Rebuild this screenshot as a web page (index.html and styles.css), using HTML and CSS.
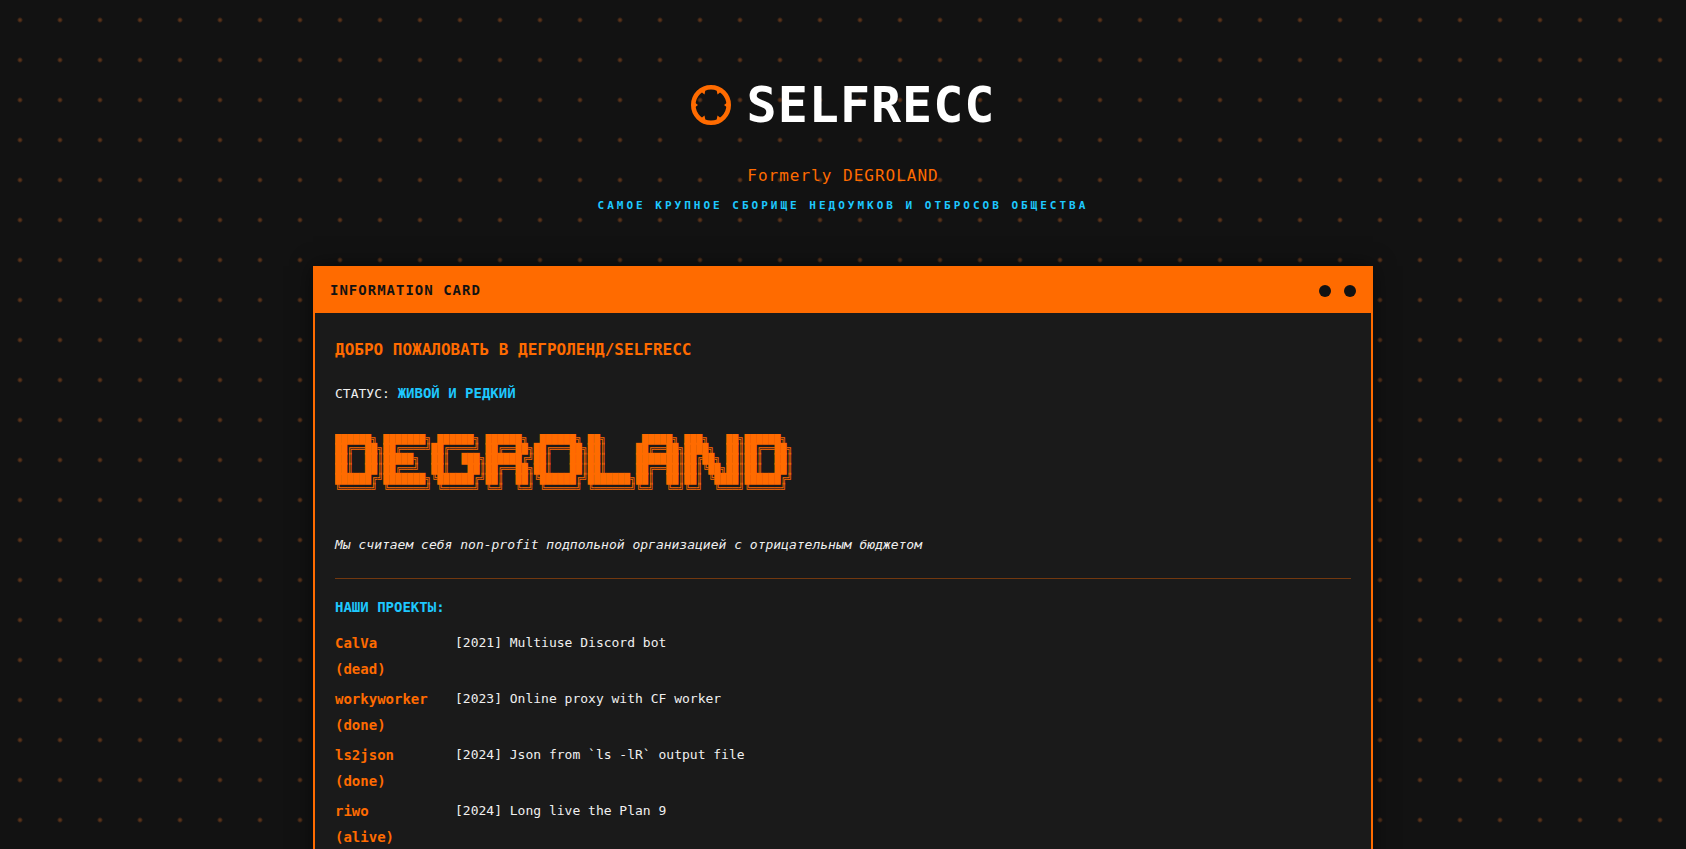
FILE: index.html
```html
<!DOCTYPE html>
<html lang="ru">
<head>
<meta charset="utf-8">
<meta name="viewport" content="width=device-width, initial-scale=1">
<title>SELFRECC</title>
<link rel="stylesheet" href="styles.css">
</head>
<body>
<div class="page">
  <header class="masthead">
    <div class="brand">
      <svg class="brand-icon" viewBox="0 0 40 40" aria-hidden="true">
        <circle cx="20" cy="20" r="17.7" fill="none" stroke="#ff6b00" stroke-width="4.6"/>
        <path fill="#ff6b00" d="M8 5 14.500 4.500 13.500 9.500 11 7.500zM32 5 25.500 4.500 26.500 9.500 29 7.500zM8 35 14.500 35.500 13.500 30.500 11 32.500zM32 35 25.500 35.500 26.500 30.500 29 32.500zM3 17 7 20 3 23zM37 17 33 20 37 23z"/>
      </svg>
      <h1 class="brand-name">SELFRECC</h1>
    </div>
    <p class="former-name">Formerly DEGROLAND</p>
    <p class="tagline">САМОЕ КРУПНОЕ СБОРИЩЕ НЕДОУМКОВ И ОТБРОСОВ ОБЩЕСТВА</p>
  </header>

  <main class="card">
    <div class="card-header">
      <span class="card-title">INFORMATION CARD</span>
      <span class="card-dots"><i class="dot"></i><i class="dot"></i></span>
    </div>
    <div class="card-body">
      <h2 class="welcome">ДОБРО ПОЖАЛОВАТЬ В ДЕГРОЛЕНД/SELFRECC</h2>
      <p class="status">СТАТУС: <strong class="status-value">ЖИВОЙ И РЕДКИЙ</strong></p>
<pre class="ascii">██████╗ ███████╗ ██████╗ ██████╗  ██████╗ ██╗      █████╗ ███╗   ██╗██████╗ 
██╔══██╗██╔════╝██╔════╝ ██╔══██╗██╔═══██╗██║     ██╔══██╗████╗  ██║██╔══██╗
██║  ██║█████╗  ██║  ███╗██████╔╝██║   ██║██║     ███████║██╔██╗ ██║██║  ██║
██║  ██║██╔══╝  ██║   ██║██╔══██╗██║   ██║██║     ██╔══██║██║╚██╗██║██║  ██║
██████╔╝███████╗╚██████╔╝██║  ██║╚██████╔╝███████╗██║  ██║██║ ╚████║██████╔╝
╚═════╝ ╚══════╝ ╚═════╝ ╚═╝  ╚═╝ ╚═════╝ ╚══════╝╚═╝  ╚═╝╚═╝  ╚═══╝╚═════╝ </pre>
      <p class="motto">Мы считаем себя non-profit подпольной организацией с отрицательным бюджетом</p>
      <section class="projects">
        <h3 class="projects-title">НАШИ ПРОЕКТЫ:</h3>
        <dl class="project-list">
          <dt>CalVa (dead)</dt><dd>[2021] Multiuse Discord bot</dd>
          <dt>workyworker (done)</dt><dd>[2023] Online proxy with CF worker</dd>
          <dt>ls2json (done)</dt><dd>[2024] Json from `ls -lR` output file</dd>
          <dt>riwo<br>(alive)</dt><dd>[2024] Long live the Plan 9</dd>
        </dl>
      </section>
    </div>
  </main>
</div>
</body>
</html>
```

FILE: styles.css
```css
:root {
  --orange: #ff6b00;
  --cyan: #1ec8ff;
  --ink: #121212;
  --panel: #1a1a1a;
  --text: #f0f0f0;
}

* {
  box-sizing: border-box;
  margin: 0;
  padding: 0;
}

body {
  background-color: var(--ink);
  background-image: radial-gradient(circle at center, rgba(255, 124, 40, 0.3) 1px, transparent 3px);
  background-size: 40px 40px;
  color: var(--text);
  font-family: "DejaVu Sans Mono", monospace;
  font-size: 13px;
  line-height: 26px;
}

.page {
  max-width: 1100px;
  margin: 0 auto;
  padding: 40px 20px;
}

.masthead {
  padding: 30px 0 47px;
  text-align: center;
}

.brand {
  display: flex;
  align-items: center;
  justify-content: center;
  gap: 16px;
  margin-bottom: 23px;
}

.brand-icon {
  width: 40px;
  height: 40px;
}

.brand-name {
  color: #fff;
  font-size: 50px;
  line-height: 70px;
  letter-spacing: 1px;
}

.former-name {
  color: var(--orange);
  font-size: 16px;
  letter-spacing: 1px;
  margin-bottom: 4px;
}

.tagline {
  color: var(--cyan);
  font-size: 11px;
  font-weight: bold;
  letter-spacing: 3px;
}

.card {
  background: var(--panel);
  border: 2px solid var(--orange);
  box-shadow: 0 0 20px rgba(0, 0, 0, 0.5);
}

.card-header {
  display: flex;
  align-items: center;
  justify-content: space-between;
  padding: 10px 15px;
  background: var(--orange);
  color: var(--ink);
  font-size: 14px;
  font-weight: bold;
  line-height: 25px;
  letter-spacing: 1px;
}

.card-dots {
  display: flex;
  gap: 13px;
}

.dot {
  width: 12px;
  height: 12px;
  border-radius: 50%;
  background: var(--ink);
}

.card-body {
  padding: 24px 20px;
}

.welcome {
  color: var(--orange);
  font-size: 16px;
  margin-bottom: 17px;
}

.status {
  margin-bottom: 27px;
}

.status-value {
  color: var(--cyan);
  font-size: 14px;
}

.ascii {
  overflow-x: auto;
  color: var(--orange);
  font-family: "DejaVu Sans Mono", monospace;
  font-size: 10px;
  line-height: 10px;
  margin-bottom: 38px;
}

.motto {
  font-style: italic;
  margin-bottom: 20px;
}

.projects {
  border-top: 1px solid #72380f;
  padding-top: 15px;
}

.projects-title {
  color: var(--cyan);
  font-size: 14px;
  margin-bottom: 10px;
}

.project-list {
  display: grid;
  grid-template-columns: 100px 1fr;
  gap: 4px 20px;
}

.project-list dt {
  color: var(--orange);
  font-size: 14px;
  font-weight: bold;
}
```
